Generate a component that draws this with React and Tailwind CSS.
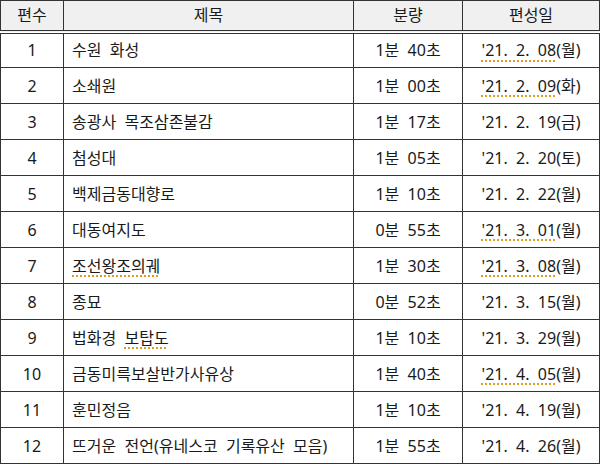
import React from 'react';

const rows = [
  { no: '1', title: '수원 화성', len: '1분  40초', date: "'21. 2. 08", day: '(월)', du: true },
  { no: '2', title: '소쇄원', len: '1분  00초', date: "'21. 2. 09", day: '(화)', du: true },
  { no: '3', title: '송광사 목조삼존불감', len: '1분  17초', date: "'21. 2. 19", day: '(금)' },
  { no: '4', title: '첨성대', len: '1분  05초', date: "'21. 2. 20", day: '(토)' },
  { no: '5', title: '백제금동대향로', len: '1분  10초', date: "'21. 2. 22", day: '(월)' },
  { no: '6', title: '대동여지도', len: '0분  55초', date: "'21. 3. 01", day: '(월)', du: true },
  { no: '7', title: '조선왕조의궤', len: '1분  30초', date: "'21. 3. 08", day: '(월)', du: true, tu: 'all' },
  { no: '8', title: '종묘', len: '0분  52초', date: "'21. 3. 15", day: '(월)' },
  { no: '9', title: '법화경 보탑도', len: '1분  10초', date: "'21. 3. 29", day: '(월)', tu: 'last' },
  { no: '10', title: '금동미륵보살반가사유상', len: '1분  40초', date: "'21. 4. 05", day: '(월)', du: true },
  { no: '11', title: '훈민정음', len: '1분  10초', date: "'21. 4. 19", day: '(월)' },
  { no: '12', title: '뜨거운 전언(유네스코 기록유산 모음)', len: '1분  55초', date: "'21. 4. 26", day: '(월)' },
];

const squiggle = 'underline decoration-dotted decoration-[#e09a2c] decoration-[1.5px] underline-offset-[4px]';

function Title({ r }) {
  if (r.tu === 'all') return <span className={squiggle}>{r.title}</span>;
  if (r.tu === 'last') {
    const [a, b] = r.title.split(' ');
    return (
      <>
        {a}  <span className={squiggle}>{b}</span>
      </>
    );
  }
  return <>{r.title.replace(/ /g, '  ')}</>;
}

export default function App() {
  return (
    <div className="w-[600px] h-[466px] bg-white" style={{ fontFamily: '"Noto Sans", "Noto Sans CJK KR", sans-serif' }}>
      <table className="w-[599px] table-fixed border-collapse text-[16px] text-[#1a1a1a] leading-none">
        <colgroup>
          <col className="w-[63px]" />
          <col className="w-[290px]" />
          <col className="w-[109px]" />
          <col className="w-[137px]" />
        </colgroup>
        <thead>
          <tr className="h-[31px] bg-[#f0f0f0]">
            <th className="border border-[#333] border-b-4 border-double font-normal">편수</th>
            <th className="border border-[#333] border-b-4 border-double font-normal">제목</th>
            <th className="border border-[#333] border-b-4 border-double font-normal">분량</th>
            <th className="border border-[#333] border-b-4 border-double font-normal">편성일</th>
          </tr>
        </thead>
        <tbody>
          {rows.map((r) => (
            <tr key={r.no} className="h-[36px]">
              <td className="border border-[#333] text-center">{r.no}</td>
              <td className="border border-[#333] pl-2 whitespace-pre">
                <Title r={r} />
              </td>
              <td className="border border-[#333] text-center whitespace-pre">{r.len}</td>
              <td className="border border-[#333] text-center whitespace-pre">
                <span className={r.du ? squiggle : ''}>{r.date.replace(/ /g, '  ')}</span>
                {r.day}
              </td>
            </tr>
          ))}
        </tbody>
      </table>
    </div>
  );
}
